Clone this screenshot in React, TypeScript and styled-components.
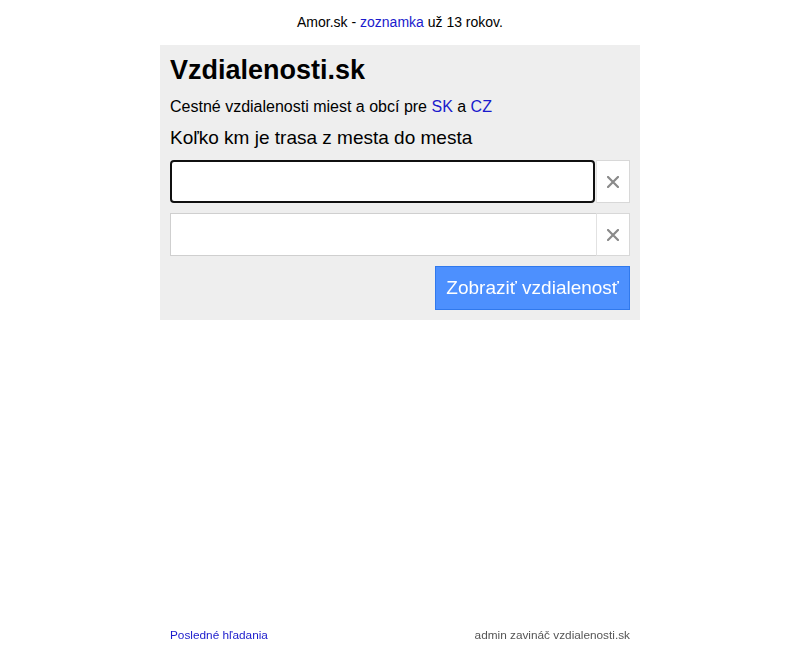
import React from 'react';
import styled, { createGlobalStyle } from 'styled-components';

const GlobalStyles = createGlobalStyle`
    html, body {
        margin: 0;
        padding: 0;
        background: #fff;
        font-family: 'Liberation Sans', Arial, sans-serif;
        color: #000;
    }

    a {
        color: #1a1acc;
        text-decoration: none;
    }
`;

const Page = styled.div`
    display: flex;
    flex-direction: column;
    align-items: center;
    min-height: 100vh;
`;

const Promo = styled.div`
    margin-top: 14px;
    font-size: 14px;
    line-height: 16px;
`;

const Panel = styled.main`
    width: 460px;
    margin-top: 15px;
    padding: 10px;
    background: #eeeeee;
`;

const Title = styled.h1`
    margin: 0 0 13px;
    font-size: 27px;
    line-height: 30px;
    font-weight: bold;
`;

const Subtitle = styled.p`
    margin: 0 0 11px;
    font-size: 16px;
    line-height: 18px;
`;

const Question = styled.h2`
    margin: 0 0 11px;
    font-size: 19px;
    line-height: 22px;
    font-weight: normal;
`;

const Form = styled.form`
    display: flex;
    flex-direction: column;
    gap: 10px;
`;

const InputRow = styled.div`
    display: flex;
    height: 43px;
`;

const CityInput = styled.input`
    flex: 1;
    min-width: 0;
    box-sizing: border-box;
    height: 100%;
    margin: 0;
    padding: 0 6px;
    border: 1px solid #cfcfcf;
    border-right: none;
    border-radius: 0;
    background: #fff;
    font-family: 'Liberation Sans', Arial, sans-serif;
    font-size: 24px;

    &:focus {
        outline: 2px solid #101010;
        outline-offset: -2px;
        border-radius: 4px;
        border-color: transparent;
        margin-right: 1px;
    }
`;

const ClearButton = styled.button`
    box-sizing: border-box;
    width: 34px;
    height: 100%;
    padding: 0;
    display: flex;
    align-items: center;
    justify-content: center;
    background: #fff;
    border: 1px solid #d8d8d8;
    border-left-color: #e2e2e2;
    cursor: pointer;
`;

const Actions = styled.div`
    display: flex;
    justify-content: flex-end;
`;

const SubmitButton = styled.button`
    box-sizing: border-box;
    height: 44px;
    padding: 0 10px;
    background: #4d90fe;
    border: 1px solid #3079ed;
    border-radius: 0;
    color: #fff;
    font-family: 'Liberation Sans', Arial, sans-serif;
    font-size: 19px;
    cursor: pointer;
`;

const Footer = styled.footer`
    margin-top: auto;
    width: 460px;
    display: flex;
    justify-content: space-between;
    padding-bottom: 20px;
    font-size: 11.8px;
    line-height: 14px;
`;

const Contact = styled.span`
    color: #555;
`;

function ClearIcon() {
    return (
        <svg width="12" height="12" viewBox="0 0 12 12">
            <path d="M1 1 L11 11 M11 1 L1 11" stroke="#8a8a8a" strokeWidth="2.2" strokeLinecap="square" />
        </svg>
    );
}

function App() {
    return (
        <Page>
            <GlobalStyles />
            <Promo>
                Amor.sk - <a href="#">zoznamka</a> už 13 rokov.
            </Promo>

            <Panel>
                <Title>Vzdialenosti.sk</Title>
                <Subtitle>
                    Cestné vzdialenosti miest a obcí pre <a href="#">SK</a> a <a href="#">CZ</a>
                </Subtitle>
                <Question>Koľko km je trasa z mesta do mesta</Question>

                <Form onSubmit={(e) => e.preventDefault()}>
                    <InputRow>
                        <CityInput type="text" autoFocus />
                        <ClearButton type="button" aria-label="Vymazať">
                            <ClearIcon />
                        </ClearButton>
                    </InputRow>
                    <InputRow>
                        <CityInput type="text" />
                        <ClearButton type="button" aria-label="Vymazať">
                            <ClearIcon />
                        </ClearButton>
                    </InputRow>
                    <Actions>
                        <SubmitButton type="submit">Zobraziť vzdialenosť</SubmitButton>
                    </Actions>
                </Form>
            </Panel>

            <Footer>
                <a href="#">Posledné hľadania</a>
                <Contact>admin zavináč vzdialenosti.sk</Contact>
            </Footer>
        </Page>
    );
}

export default App;
